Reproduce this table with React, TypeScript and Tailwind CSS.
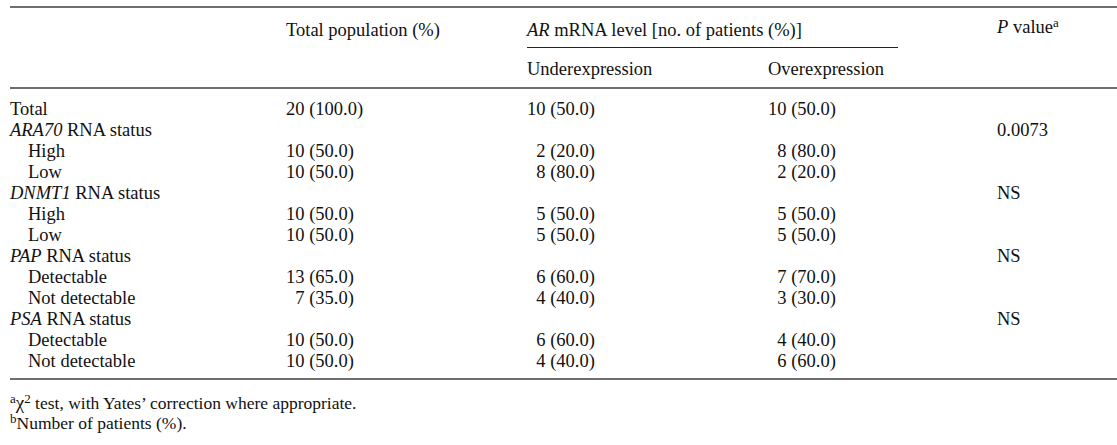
import React from "react";

type Row =
  | { kind: "total"; label: string; total: string; under: string; over: string }
  | { kind: "group"; gene: string; p: string }
  | { kind: "item"; label: string; total: string; under: string; over: string };

const rows: Row[] = [
  { kind: "total", label: "Total", total: "20 (100.0)", under: "10 (50.0)", over: "10 (50.0)" },
  { kind: "group", gene: "ARA70", p: "0.0073" },
  { kind: "item", label: "High", total: "10 (50.0)", under: "2 (20.0)", over: "8 (80.0)" },
  { kind: "item", label: "Low", total: "10 (50.0)", under: "8 (80.0)", over: "2 (20.0)" },
  { kind: "group", gene: "DNMT1", p: "NS" },
  { kind: "item", label: "High", total: "10 (50.0)", under: "5 (50.0)", over: "5 (50.0)" },
  { kind: "item", label: "Low", total: "10 (50.0)", under: "5 (50.0)", over: "5 (50.0)" },
  { kind: "group", gene: "PAP", p: "NS" },
  { kind: "item", label: "Detectable", total: "13 (65.0)", under: "6 (60.0)", over: "7 (70.0)" },
  { kind: "item", label: "Not detectable", total: "7 (35.0)", under: "4 (40.0)", over: "3 (30.0)" },
  { kind: "group", gene: "PSA", p: "NS" },
  { kind: "item", label: "Detectable", total: "10 (50.0)", under: "6 (60.0)", over: "4 (40.0)" },
  { kind: "item", label: "Not detectable", total: "10 (50.0)", under: "4 (40.0)", over: "6 (60.0)" },
];

// pad single-digit counts so the digits line up on the right
function Num({ v }: { v: string }) {
  const single = /^\d /.test(v);
  return (
    <span className="whitespace-pre">
      {single && <span className="invisible">0</span>}
      {v}
    </span>
  );
}

const cols = "grid grid-cols-[276px_241px_241px_229px_1fr]";

export default function App() {
  return (
    <div
      className="min-h-[445px] w-full bg-white pl-[10px] text-[#111] text-[18.5px] leading-[21px]"
      style={{ fontFamily: '"Liberation Serif", "Times New Roman", serif' }}
    >
      {/* top rule */}
      <div className="pt-[6px]">
        <div className="h-[2px] bg-[#6e6e6e]" />
      </div>

      {/* Header */}
      <div className={`${cols} pt-[12px]`}>
        <div />
        <div>Total population (%)</div>
        <div className="col-span-2">
          <i>AR</i> mRNA level [no. of patients (%)]
        </div>
        <div className="-mt-[3px]">
          <i>P</i> value<sup className="text-[13px]">a</sup>
        </div>
      </div>
      <div className={`${cols} pt-[6px]`}>
        <div />
        <div />
        <div className="col-span-2">
          <div className="h-[1px] w-[371px] bg-[#222]" />
        </div>
        <div />
      </div>
      <div className={`${cols} pt-[11px]`}>
        <div />
        <div />
        <div>Underexpression</div>
        <div>Overexpression</div>
        <div />
      </div>
      <div className="pt-[7px]">
        <div className="h-[2px] bg-[#6e6e6e]" />
      </div>

      {/* Body */}
      <div className="pt-[10px]">
        {rows.map((r, i) =>
          r.kind === "group" ? (
            <div key={i} className={cols}>
              <div className="whitespace-nowrap">
                <i>{r.gene}</i> RNA status
              </div>
              <div />
              <div />
              <div />
              <div>{r.p}</div>
            </div>
          ) : (
            <div key={i} className={cols}>
              <div className={r.kind === "item" ? "pl-[18px]" : ""}>{r.label}</div>
              <div>
                <Num v={r.total} />
              </div>
              <div>
                <Num v={r.under} />
              </div>
              <div>
                <Num v={r.over} />
              </div>
              <div />
            </div>
          )
        )}
      </div>

      <div className="pt-[6px]">
        <div className="h-[2px] bg-[#6e6e6e]" />
      </div>

      {/* Footnotes */}
      <div className="pt-[13px] text-[17.5px] leading-[20px]">
        <div>
          <sup className="text-[13px]">a</sup>
          <span className="text-[19px]">χ</span>
          <sup className="text-[13px]">2</sup> test, with Yates’ correction where appropriate.
        </div>
        <div>
          <sup className="text-[13px]">b</sup>Number of patients (%).
        </div>
      </div>
    </div>
  );
}
